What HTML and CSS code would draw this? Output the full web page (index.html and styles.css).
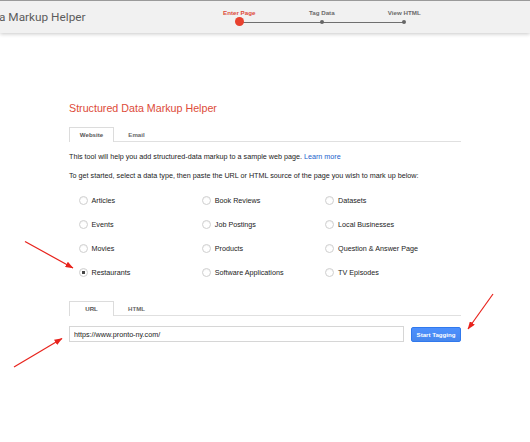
FILE: index.html
```html
<!DOCTYPE html>
<html lang="en">
<head>
<meta charset="utf-8">
<title>Structured Data Markup Helper</title>
<link rel="stylesheet" href="styles.css">
</head>
<body>
<header class="topbar">
  <div class="brand">a Markup Helper</div>
  <ol class="stepper">
    <li class="step active"><span class="step-label">Enter Page</span><span class="step-track"><span class="dot"></span></span></li>
    <li class="step"><span class="step-label">Tag Data</span><span class="step-track"><span class="dot"></span></span></li>
    <li class="step"><span class="step-label">View HTML</span><span class="step-track"><span class="dot"></span></span></li>
  </ol>
</header>

<main class="content">
  <h1 class="title">Structured Data Markup Helper</h1>

  <div class="tabs">
    <div class="tab active">Website</div>
    <div class="tab">Email</div>
  </div>

  <p class="intro">This tool will help you add structured-data markup to a sample web page. <a href="#" class="link">Learn more</a></p>
  <p class="intro second">To get started, select a data type, then paste the URL or HTML source of the page you wish to mark up below:</p>

  <div class="types">
    <label class="type"><input type="radio" name="t"><span>Articles</span></label>
    <label class="type"><input type="radio" name="t"><span>Book Reviews</span></label>
    <label class="type"><input type="radio" name="t"><span>Datasets</span></label>
    <label class="type"><input type="radio" name="t"><span>Events</span></label>
    <label class="type"><input type="radio" name="t"><span>Job Postings</span></label>
    <label class="type"><input type="radio" name="t"><span>Local Businesses</span></label>
    <label class="type"><input type="radio" name="t"><span>Movies</span></label>
    <label class="type"><input type="radio" name="t"><span>Products</span></label>
    <label class="type"><input type="radio" name="t"><span>Question &amp; Answer Page</span></label>
    <label class="type"><input type="radio" name="t" checked><span>Restaurants</span></label>
    <label class="type"><input type="radio" name="t"><span>Software Applications</span></label>
    <label class="type"><input type="radio" name="t"><span>TV Episodes</span></label>
  </div>

  <div class="tabs source-tabs">
    <div class="tab active">URL</div>
    <div class="tab">HTML</div>
  </div>

  <div class="url-row">
    <input class="url-input" type="text" value="https://www.pronto-ny.com/">
    <button class="start-btn" type="button">Start Tagging</button>
  </div>
</main>

<svg class="annotations" width="530" height="442" viewBox="0 0 530 442" aria-hidden="true">
  <defs>
    <marker id="ah" markerWidth="8" markerHeight="6" refX="7.5" refY="3" orient="auto" markerUnits="userSpaceOnUse">
      <path d="M0,0 L8,3 L0,6 Z" fill="#e8231c"/>
    </marker>
  </defs>
  <line x1="25" y1="241.5" x2="73" y2="268" stroke="#e8231c" stroke-width="1.2" marker-end="url(#ah)"/>
  <line x1="14" y1="367" x2="62" y2="338.5" stroke="#e8231c" stroke-width="1.2" marker-end="url(#ah)"/>
  <line x1="493" y1="294" x2="468" y2="329" stroke="#e8231c" stroke-width="1.2" marker-end="url(#ah)"/>
</svg>
</body>
</html>
```

FILE: styles.css
```css
* { box-sizing: border-box; }

html, body {
  margin: 0;
  padding: 0;
  background: #fff;
}

body {
  width: 530px;
  height: 442px;
  overflow: hidden;
  position: relative;
  font-family: "Liberation Sans", Arial, sans-serif;
  color: #222;
}

/* ---------- top bar ---------- */
.topbar {
  height: 33px;
  background: #f1f1f1;
  border-top: 1px solid #9a9a9a;
  box-shadow: 0 1px 4px rgba(0, 0, 0, 0.22);
  display: grid;
  grid-template-columns: 198px 248px;
  position: relative;
  z-index: 1;
}

.brand {
  font-family: Roboto, "Liberation Sans", sans-serif;
  font-size: 11.8px;
  color: #5c5c5c;
  line-height: 32px;
  margin-left: -1px;
  white-space: nowrap;
}

.stepper {
  list-style: none;
  margin: 0;
  padding: 0;
  display: grid;
  grid-template-columns: repeat(3, 82.5px);
}

.step {
  position: relative;
  display: flex;
  flex-direction: column;
  align-items: center;
  padding-top: 7.5px;
}

.step-label {
  font-size: 6.2px;
  font-weight: bold;
  line-height: 8px;
  color: #6b6b6b;
  white-space: nowrap;
}

.step.active .step-label { color: #dd4b39; }

.step-track {
  height: 10px;
  display: flex;
  align-items: center;
  justify-content: center;
  position: relative;
  z-index: 1;
}

.step:not(:first-child)::before {
  content: "";
  position: absolute;
  top: 20.5px;
  right: 50%;
  width: 100%;
  height: 1px;
  background: #6f6f6f;
}

.dot {
  width: 4px;
  height: 4px;
  border-radius: 50%;
  background: #666;
}

.step.active .dot {
  width: 9px;
  height: 9px;
  background: #e8412f;
}

/* ---------- content ---------- */
.content {
  width: 392px;
  margin: 0 auto;
}

.title {
  margin: 68.5px 0 0;
  font-size: 10.7px;
  line-height: 13px;
  font-weight: normal;
  color: #dd4b39;
}

.tabs {
  display: flex;
  margin-top: 12.5px;
  border-bottom: 1px solid #e0e0e0;
  height: 15px;
}

.tab {
  width: 45px;
  height: 14px;
  text-align: center;
  font-size: 6.1px;
  font-weight: bold;
  line-height: 13px;
  color: #666;
  border: 1px solid transparent;
  border-bottom: 0;
}

.tab.active {
  height: 15px;
  background: #fff;
  border-color: #dcdcdc;
  color: #555;
}

.intro {
  margin: 10px 0 0;
  font-size: 7.2px;
  line-height: 10px;
  color: #222;
}

.intro.second { margin-top: 9px; }

.link {
  color: #1a5fcc;
  text-decoration: none;
}

.types {
  margin-top: 7px;
  padding-left: 9.5px;
  display: grid;
  grid-template-columns: repeat(3, 123.3px);
  grid-auto-rows: 24px;
}

.type {
  display: flex;
  align-items: center;
  gap: 4px;
  font-size: 7.2px;
  color: #222;
  white-space: nowrap;
}

.type input {
  -webkit-appearance: none;
  appearance: none;
  margin: 0;
  width: 9px;
  height: 9px;
  border: 1px solid #cfcfcf;
  border-radius: 50%;
  background: #fff;
  box-shadow: inset 0 1px 1px rgba(0, 0, 0, 0.05);
  flex: none;
}

.type input:checked {
  background: radial-gradient(circle, #444 0, #444 1.4px, #fff 1.9px);
}

.source-tabs { margin-top: 17px; }

.url-row {
  margin-top: 10px;
  display: flex;
  align-items: center;
  gap: 7px;
}

.url-input {
  width: 335px;
  height: 16px;
  margin: 0;
  padding: 0 4px;
  border: 1px solid #d6d6d6;
  font-family: "Liberation Sans", Arial, sans-serif;
  font-size: 7.2px;
  color: #222;
  outline: none;
}

.start-btn {
  width: 50px;
  height: 15px;
  margin: 0;
  padding: 0;
  border: 1px solid #3079ed;
  border-radius: 2px;
  background: linear-gradient(#4d90fe, #4787ed);
  color: #fff;
  font-family: "Liberation Sans", Arial, sans-serif;
  font-size: 6.1px;
  font-weight: bold;
}

/* ---------- annotation arrows ---------- */
.annotations {
  position: absolute;
  top: 0;
  left: 0;
  pointer-events: none;
  z-index: 2;
}
```
